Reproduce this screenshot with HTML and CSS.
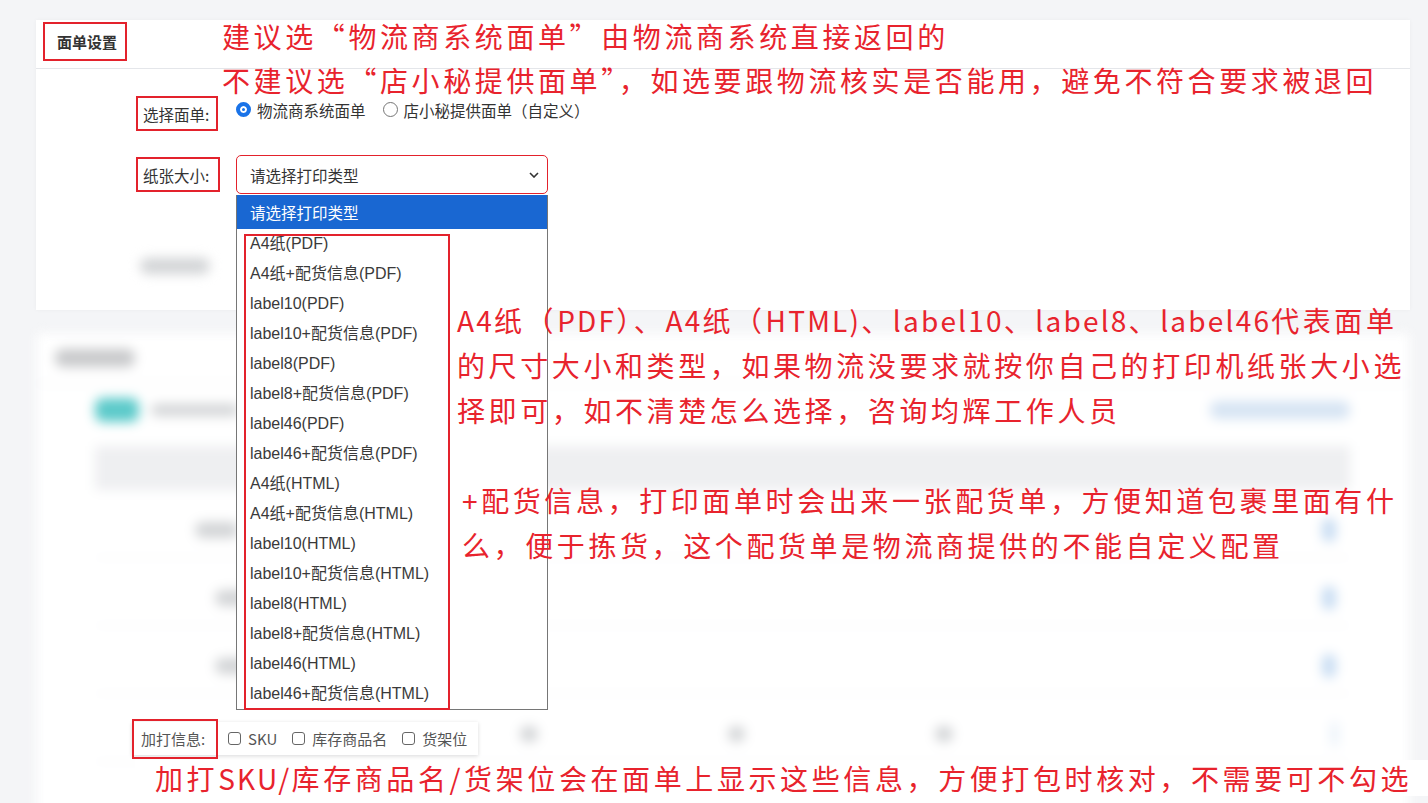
FILE: index.html
```html
<!DOCTYPE html>
<html lang="zh-CN">
<head>
    <meta charset="UTF-8">
    <meta name="viewport" content="width=device-width, initial-scale=1.0">
    <title>面单设置</title>
    <link rel="stylesheet" href="styles.css">
</head>
<body>
    <div class="page">
        <section class="card card-setting">
            <div class="card-head">
                <span class="card-title mark">面单设置</span>
            </div>
            <div class="form">
                <div class="form-row row-type">
                    <span class="form-label mark">选择面单:</span>
                    <label class="radio checked"><i></i>物流商系统面单</label>
                    <label class="radio"><i></i>店小秘提供面单（自定义）</label>
                </div>
                <div class="form-row row-paper">
                    <span class="form-label mark">纸张大小:</span>
                    <div class="select-wrap">
                        <div class="select">
                            <span>请选择打印类型</span>
                            <svg width="10" height="6" viewBox="0 0 10 6"><path d="M1 1l4 4 4-4" fill="none" stroke="#333" stroke-width="1.6"/></svg>
                        </div>
                        <div class="options">
                            <div class="option active">请选择打印类型</div>
                            <div class="option">A4纸(PDF)</div>
                            <div class="option">A4纸+配货信息(PDF)</div>
                            <div class="option">label10(PDF)</div>
                            <div class="option">label10+配货信息(PDF)</div>
                            <div class="option">label8(PDF)</div>
                            <div class="option">label8+配货信息(PDF)</div>
                            <div class="option">label46(PDF)</div>
                            <div class="option">label46+配货信息(PDF)</div>
                            <div class="option">A4纸(HTML)</div>
                            <div class="option">A4纸+配货信息(HTML)</div>
                            <div class="option">label10(HTML)</div>
                            <div class="option">label10+配货信息(HTML)</div>
                            <div class="option">label8(HTML)</div>
                            <div class="option">label8+配货信息(HTML)</div>
                            <div class="option">label46(HTML)</div>
                            <div class="option">label46+配货信息(HTML)</div>
                            <div class="options-mark"></div>
                        </div>
                    </div>
                </div>
                <div class="form-foot blur">
                    <span class="blob grey"></span>
                </div>
            </div>
        </section>

        <section class="card card-rules blur">
            <div class="card-head">
                <span class="blob title-blob"></span>
            </div>
            <div class="toolbar">
                <span class="blob teal"></span>
                <span class="blob grey small"></span>
                <span class="spacer"></span>
                <span class="blob light-blue"></span>
            </div>
            <div class="table">
                <div class="table-head"></div>
                <div class="table-row">
                    <span class="blob grey cell-a"></span>
                    <span class="spacer"></span>
                    <span class="blob dot"></span>
                </div>
                <div class="table-row">
                    <span class="blob grey cell-b"></span>
                    <span class="line-cell"></span>
                    <span class="spacer"></span>
                    <span class="blob dot"></span>
                </div>
                <div class="table-row">
                    <span class="blob grey cell-b"></span>
                    <span class="line-cell"></span>
                    <span class="spacer"></span>
                    <span class="blob dot"></span>
                </div>
                <div class="table-row wide">
                    <span class="blob grey cell-c"></span>
                    <span class="blob grey cell-c"></span>
                    <span class="blob grey cell-c"></span>
                    <span class="spacer"></span>
                    <span class="blob dot"></span>
                </div>
            </div>
        </section>

        <!-- 加打信息 -->
        <div class="extra-row">
            <span class="form-label mark">加打信息:</span>
            <label class="check"><i></i>SKU</label>
            <label class="check"><i></i>库存商品名</label>
            <label class="check"><i></i>货架位</label>
        </div>

        <!-- 标注 -->
        <div class="note note-top">建议选“物流商系统面单”由物流商系统直接返回的<br>不建议选“店小秘提供面单”，如选要跟物流核实是否能用，避免不符合要求被退回</div>
        <div class="note note-size"><span class="lat">A4</span>纸（<span class="lat">PDF</span>）、<span class="lat">A4</span>纸（<span class="lat">HTML)</span>、<span class="lat">label10</span>、<span class="lat">label8</span>、<span class="lat">label46</span>代表面单<br>的尺寸大小和类型，如果物流没要求就按你自己的打印机纸张大小选<br>择即可，如不清楚怎么选择，咨询均辉工作人员</div>
        <div class="note note-pick">+配货信息，打印面单时会出来一张配货单，方便知道包裹里面有什<br>么，便于拣货，这个配货单是物流商提供的不能自定义配置</div>
        <div class="note note-extra">加打<span class="lat">SKU/</span>库存商品名/货架位会在面单上显示这些信息，方便打包时核对，不需要可不勾选</div>
    </div>
</body>
</html>
```

FILE: styles.css
```css
body {
    margin: 0;
    background-color: #f4f5f7;
    font-family: 'Liberation Sans', 'Noto Sans CJK SC', sans-serif;
    font-size: 14px;
    color: #333;
    overflow: hidden;
}

.page {
    position: relative;
    height: 803px;
    padding: 20px 18px 0 36px;
    box-sizing: border-box;
}

.card {
    background-color: #fff;
    box-shadow: 0 0 4px rgba(0, 0, 0, 0.04);
}

.card-head {
    height: 48px;
    border-bottom: 1px solid #e4e6ea;
    display: flex;
    align-items: flex-start;
}

.mark {
    border: 2px solid #e3222c;
    box-sizing: border-box;
}

.card-title {
    margin: 2px 0 0 7px;
    width: 84px;
    height: 39px;
    padding-left: 12px;
    display: flex;
    align-items: center;
    font-family: 'Noto Sans CJK SC', sans-serif;
    font-size: 15px;
    font-weight: bold;
    color: #333;
}

/* 表单 */
.card-setting {
    height: 290px;
    position: relative;
    z-index: 2;
}

.form {
    padding: 27px 0 0 100px;
}

.form-row {
    display: flex;
    align-items: center;
}

.form-label {
    width: 84px;
    height: 35px;
    padding-left: 5px;
    display: flex;
    align-items: center;
    margin-right: 16px;
    font-family: 'Noto Sans CJK SC', sans-serif;
    font-size: 15.5px;
    color: #333;
    flex-shrink: 0;
    white-space: nowrap;
}

.row-type .form-label {
    width: 82px;
    margin-right: 18px;
}

.radio {
    display: flex;
    align-items: center;
    margin-right: 17px;
    font-family: 'Noto Sans CJK SC', sans-serif;
    font-size: 15.5px;
    color: #333;
    margin-top: -8px;
}

.radio i {
    width: 13px;
    height: 13px;
    border: 1px solid #767676;
    border-radius: 50%;
    margin-right: 6px;
    box-sizing: content-box;
}

.radio.checked i {
    width: 7px;
    height: 7px;
    border: 4px solid #1a73e8;
    background-color: #1a73e8;
    box-shadow: inset 0 0 0 2px #fff;
}

.row-paper {
    margin-top: 24px;
}

.select-wrap {
    position: relative;
}

.select {
    width: 312px;
    height: 39px;
    border: 1px solid #e3222c;
    border-radius: 5px;
    box-sizing: border-box;
    padding: 0 8px 0 13px;
    display: flex;
    align-items: center;
    justify-content: space-between;
    font-family: 'Noto Sans CJK SC', sans-serif;
    font-size: 15.5px;
    color: #333;
}

.options {
    position: absolute;
    top: 40px;
    left: 0;
    width: 312px;
    background-color: #fff;
    border: 1px solid #767676;
    border-top: none;
    box-sizing: border-box;
    z-index: 5;
}

.option {
    height: 30px;
    line-height: 30px;
    padding-left: 13px;
    font-size: 16px;
    color: #3a3a3a;
    white-space: nowrap;
}

.option.active {
    height: 34px;
    line-height: 34px;
    background-color: #1967d2;
    color: #fff;
    font-family: 'Noto Sans CJK SC', sans-serif;
    font-size: 15.5px;
}

.options-mark {
    position: absolute;
    left: 7px;
    top: 39px;
    width: 206px;
    height: 476px;
    border: 2px solid #e3222c;
    box-sizing: border-box;
}

.form-foot {
    margin-top: 64px;
    padding-left: 4px;
}

/* 模糊的背景内容 */
.blur {
    filter: blur(6px);
}

.blob {
    display: inline-block;
    border-radius: 8px;
}

.blob.grey {
    width: 70px;
    height: 16px;
    background-color: #d2d4d6;
}

.card-rules {
    margin-top: 23px;
    height: 520px;
}

.card-rules .card-head {
    height: 50px;
    align-items: center;
    padding-left: 19px;
    border-bottom-color: #eceef0;
}

.title-blob {
    width: 80px;
    height: 18px;
    background-color: #c8c9cb;
}

.toolbar {
    display: flex;
    align-items: center;
    gap: 12px;
    padding: 14px 60px 0 59px;
    height: 24px;
}

.spacer {
    flex: 1;
}

.blob.teal {
    width: 44px;
    height: 24px;
    background-color: #5ccaca;
}

.blob.small {
    width: 88px;
    height: 12px;
}

.blob.light-blue {
    width: 140px;
    height: 18px;
    background-color: #d6e4f3;
}

.table {
    margin: 24px 60px 0 59px;
}

.table-head {
    height: 44px;
    background-color: #eeeff1;
}

.table-row {
    height: 68px;
    display: flex;
    align-items: center;
    padding: 12px 14px 0 100px;
    box-sizing: border-box;
    border-bottom: 1px solid #f1f2f4;
}

.table-row .cell-b {
    margin-left: 20px;
    width: 40px;
}

.table-row .cell-a {
    width: 44px;
}

.line-cell {
    width: 1px;
    height: 30px;
    margin-left: 200px;
    background-color: #bbb;
}

.table-row.wide {
    padding-left: 425px;
    gap: 190px;
}

.blob.cell-c {
    width: 80px;
}

.blob.dot {
    width: 14px;
    height: 24px;
    background-color: #c7dcf2;
}

/* 加打信息 */
.extra-row {
    position: absolute;
    left: 132px;
    top: 722px;
    width: 346px;
    height: 33px;
    background-color: #fff;
    box-shadow: 0 1px 4px rgba(0, 0, 0, 0.15);
    display: flex;
    align-items: center;
    z-index: 6;
}

.extra-row .form-label {
    width: 86px;
    height: 40px;
    margin: 0 10px 0 0;
    padding-left: 7px;
    font-size: 15px;
    color: #555;
}

.check {
    display: flex;
    align-items: center;
    flex-shrink: 0;
    white-space: nowrap;
    margin-right: 15px;
    font-family: 'Noto Sans CJK SC', sans-serif;
    font-size: 15px;
    color: #555;
}

.check:last-child {
    margin-right: 0;
}

.check i {
    width: 11px;
    height: 11px;
    border: 1px solid #666;
    border-radius: 3px;
    margin-right: 7px;
}

/* 标注 */
.note {
    position: absolute;
    font-family: 'Noto Sans CJK SC', sans-serif;
    font-size: 28px;
    letter-spacing: 3.6px;
    line-height: 44px;
    color: #e8232d;
    white-space: nowrap;
    z-index: 8;
}

.note .lat {
    letter-spacing: 2.2px;
}

.note-top {
    left: 222px;
    top: 14px;
}

.note-size {
    left: 457px;
    top: 298px;
    line-height: 45px;
}

.note-pick {
    left: 462px;
    top: 478px;
    line-height: 45px;
}

.note-extra {
    left: 135px;
    top: 760px;
    width: 1293px;
    padding-left: 20px;
    line-height: 36px;
    background-color: #fff;
}
```
